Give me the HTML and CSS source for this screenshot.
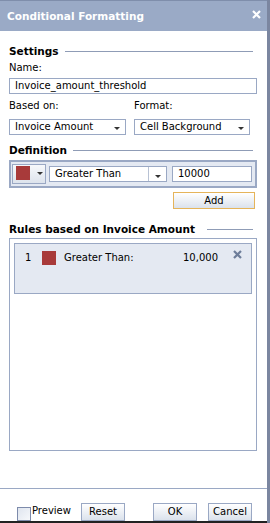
FILE: index.html
```html
<!DOCTYPE html>
<html lang="en">
<head>
  <meta charset="UTF-8" />
  <title>Conditional Formatting</title>
  <link rel="stylesheet" href="styles.css">
</head>
<body>

<div class="dialog">
  <div class="titlebar">
    <span class="title">Conditional Formatting</span>
    <svg class="close" width="9" height="9" viewBox="0 0 9 9">
      <path d="M1 1 L8 8 M8 1 L1 8" stroke="#fff" stroke-width="2.2"/>
    </svg>
  </div>

  <div class="body">
    <div class="section-head"><span>Settings</span><div class="rule"></div></div>

    <div class="label">Name:</div>
    <div class="input wide">Invoice_amount_threshold</div>

    <div class="row two">
      <div class="col">
        <div class="label">Based on:</div>
        <div class="select s1"><span>Invoice Amount</span><span class="arrow"></span></div>
      </div>
      <div class="col">
        <div class="label">Format:</div>
        <div class="select s2"><span>Cell Background</span><span class="arrow"></span></div>
      </div>
    </div>

    <div class="section-head def"><span>Definition</span><div class="rule"></div></div>
    <div class="defbox">
      <div class="colorbtn"><span class="swatch"></span><span class="arrow dark"></span></div>
      <div class="select op"><span>Greater Than</span><span class="arrow-box"><span class="arrow"></span></span></div>
      <div class="input val">10000</div>
    </div>
    <div class="add-row"><div class="btn add">Add</div></div>

    <div class="section-head rules-head"><span>Rules based on Invoice Amount</span><div class="rule short"></div></div>
    <div class="rules">
      <div class="rule-item">
        <span class="num">1</span>
        <span class="swatch"></span>
        <span class="cond">Greater Than:</span>
        <span class="amount">10,000</span>
        <svg class="remove" width="9" height="9" viewBox="0 0 9 9">
          <path d="M1 1 L8 8 M8 1 L1 8" stroke="#6d7d9a" stroke-width="2.2"/>
        </svg>
      </div>
    </div>
  </div>

  <div class="footer">
    <label class="preview"><span class="check"></span><span class="preview-text">Preview</span></label>
    <div class="btn reset">Reset</div>
    <div class="btn ok">OK</div>
    <div class="btn cancel">Cancel</div>
  </div>
</div>

</body>
</html>
```

FILE: styles.css
```css
html, body {
  margin: 0;
  padding: 0;
  background: #fff;
  font-family: "DejaVu Sans", Verdana, sans-serif;
  font-size: 10px;
  color: #000;
}

.dialog {
  width: 267px;
  height: 523px;
  border-right: 3px solid #7b86a0;
  display: flex;
  flex-direction: column;
}

.titlebar {
  height: 30px;
  flex: 0 0 30px;
  border-top: 1px solid #7f8eab;
  background: #9aaac6;
  display: flex;
  align-items: center;
  justify-content: space-between;
  padding: 0 6px 0 7px;
}

.title {
  color: #fff;
  font-weight: bold;
  font-size: 10.5px;
}

.close {
  margin-top: -3px;
}

.body {
  flex: 1;
  padding: 13px 10px 0 9px;
  display: flex;
  flex-direction: column;
}

.section-head {
  display: flex;
  align-items: center;
  font-weight: bold;
  font-size: 10.5px;
  height: 14px;
  flex: 0 0 14px;
}

.section-head .rule {
  flex: 1;
  height: 1px;
  background: #8f9cb6;
  margin: 0 4px 0 6px;
}

.section-head .rule.short {
  flex: 0 0 46px;
  margin-left: auto;
}

.label {
  margin-top: 4px;
  height: 12px;
  line-height: 12px;
}

.input, .select {
  box-sizing: border-box;
  height: 16px;
  border: 1px solid #9aa8c4;
  background: #fff;
  line-height: 14px;
  padding-left: 5px;
  white-space: nowrap;
}

.input.wide {
  width: 248px;
  margin-top: 4px;
}

.row.two {
  display: flex;
  gap: 8px;
}

.row.two .label {
  margin-top: 6px;
  margin-bottom: 7px;
}

.select {
  display: flex;
  justify-content: space-between;
  align-items: center;
}

.s1 { width: 117px; }
.s2 { width: 116px; }

.arrow {
  width: 0;
  height: 0;
  border-left: 3px solid transparent;
  border-right: 3px solid transparent;
  border-top: 3px solid #333;
  margin: 3px 5px 0 0;
}

.section-head.def {
  margin-top: 8px;
}

.defbox {
  margin-top: 3px;
  width: 248px;
  box-sizing: border-box;
  height: 28px;
  flex: 0 0 28px;
  border: 2px solid #9aa8c4;
  background: #e4e9f2;
  display: flex;
  align-items: center;
  padding-left: 1px;
}

.colorbtn {
  box-sizing: border-box;
  width: 34px;
  height: 20px;
  border: 1px solid #9aa8c4;
  background: linear-gradient(#f6f8fb, #dde3ec);
  display: flex;
  align-items: flex-start;
  padding: 1px 0 0 3px;
}

.swatch {
  display: inline-block;
  width: 14px;
  height: 14px;
  background: #a83a3a;
}

.colorbtn .arrow {
  margin: 6px 0 0 7px;
}

.select.op {
  width: 118px;
  margin-left: 3px;
  padding-right: 0;
}

.arrow-box {
  height: 14px;
  width: 17px;
  border-left: 1px solid #b8c2d4;
  display: flex;
  align-items: center;
  justify-content: center;
}

.arrow-box .arrow {
  margin: 5px 0 0 0;
}

.input.val {
  width: 80px;
  margin-left: 5px;
}

.add-row {
  display: flex;
  justify-content: flex-end;
  margin-top: 4px;
  padding-right: 2px;
}

.btn {
  box-sizing: border-box;
  height: 18px;
  border: 1px solid #9aa8c4;
  background: linear-gradient(#ffffff, #dbe2ec);
  text-align: center;
  line-height: 16px;
}

.btn.add {
  width: 82px;
  height: 17px;
  border: 1px solid #e5b45a;
  line-height: 15px;
}

.rules-head {
  margin-top: 13px;
}

.rules {
  margin-top: 2px;
  width: 248px;
  height: 213px;
  flex: 0 0 213px;
  box-sizing: border-box;
  border: 1px solid #9aa8c4;
  padding: 4px 4px;
}

.rule-item {
  height: 51px;
  box-sizing: border-box;
  border: 1px solid #9aa8c4;
  background: #e4e9f2;
  display: flex;
  align-items: flex-start;
  padding-top: 7px;
  position: relative;
}

.rule-item .num {
  margin-left: 10px;
  width: 17px;
  line-height: 14px;
}

.rule-item .cond {
  margin-left: 8px;
  line-height: 14px;
}

.rule-item .amount {
  margin-left: auto;
  margin-right: 33px;
  line-height: 14px;
}

.remove {
  position: absolute;
  top: 6px;
  right: 9px;
}

.footer {
  height: 32px;
  flex: 0 0 32px;
  border-top: 1px solid #9aa8c4;
  border-bottom: 2px solid #222;
  display: flex;
  align-items: flex-end;
  padding-left: 17px;
}

.preview {
  display: flex;
  align-items: flex-end;
  width: 64px;
}

.preview-text {
  line-height: 12px;
  margin-bottom: 4px;
}

.check {
  box-sizing: border-box;
  width: 14px;
  height: 14px;
  border: 1px solid #7d8bab;
  background: linear-gradient(135deg, #dfe5ef, #f6f8fb);
  margin-right: 1px;
}

.btn.reset, .btn.ok, .btn.cancel {
  width: 44px;
}

.btn.ok {
  margin-left: 28px;
}

.btn.cancel {
  margin-left: 11px;
}
```
